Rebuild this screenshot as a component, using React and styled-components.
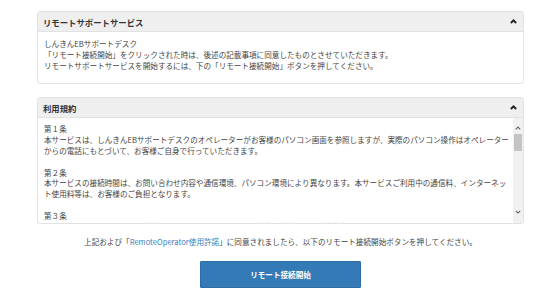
import styled, { createGlobalStyle } from "styled-components";

const GlobalStyle = createGlobalStyle`
  body {
    margin: 0;
    background: #fff;
    font-family: "Noto Sans CJK JP", "Noto Sans", sans-serif;
    color: #444;
  }
`;

const Page = styled.div`
  padding: 11px 29px 0 37px;
`;

const Panel = styled.section`
  border: 1px solid #e2e2e2;
  border-radius: 3px;
  background: #fff;
  margin-bottom: 13px;
  overflow: hidden;
`;

const Heading = styled.div`
  display: flex;
  align-items: center;
  justify-content: space-between;
  height: 19px;
  padding: 0 6px 0 5px;
  background: #efefef;
  border-bottom: 1px solid #e2e2e2;
  font-size: 8.4px;
  font-weight: bold;
  color: #333;
`;

const Body = styled.div`
  padding: 7px 6px 12px;
  font-size: 7.6px;
  line-height: 10.8px;
`;

const ScrollBody = styled.div`
  display: flex;
  height: 105px;
`;

const ScrollText = styled.div`
  flex: 1;
  overflow: hidden;
  padding: 6px 0 0 6px;
  max-width: 465px;
  font-size: 7.6px;
  line-height: 10.8px;
`;

const Article = styled.p`
  margin: 0 0 10.8px;
`;

const Scrollbar = styled.div`
  margin-left: auto;
  width: 10px;
  background: #f1f1f1;
  display: flex;
  flex-direction: column;
  align-items: center;
  padding: 8px 0 9px;
  box-sizing: border-box;
`;

const Thumb = styled.div`
  width: 8px;
  height: 17px;
  margin-top: 4px;
  background: #c4c4c4;
`;

const Spacer = styled.div`
  flex: 1;
`;

const Notice = styled.p`
  margin: 12px 0 0;
  text-align: center;
  font-size: 7.6px;
  line-height: 10px;
  color: #444;
  a {
    color: #3a7fc1;
    text-decoration: none;
  }
`;

const ButtonRow = styled.div`
  display: flex;
  justify-content: center;
  margin-top: 14px;
`;

const Button = styled.button`
  width: 161px;
  height: 27px;
  background: #337ab7;
  border: 1px solid #2e6da4;
  border-radius: 1px;
  color: #fff;
  font-family: inherit;
  font-size: 7.6px;
  font-weight: bold;
  cursor: pointer;
`;

const Chevron = ({ up = true, weight = 2.2, color = "#222", w = 7, h = 5 }) => (
  <svg width={w} height={h} viewBox="0 0 8 5">
    <polyline
      points={up ? "1,4.2 4,1.2 7,4.2" : "1,1 4,4 7,1"}
      fill="none"
      stroke={color}
      strokeWidth={weight}
    />
  </svg>
);

export default function App() {
  return (
    <Page>
      <GlobalStyle />
      <Panel>
        <Heading>
          <span>リモートサポートサービス</span>
          <Chevron />
        </Heading>
        <Body>
          しんきんEBサポートデスク
          <br />
          「リモート接続開始」をクリックされた時は、後述の記載事項に同意したものとさせていただきます。
          <br />
          リモートサポートサービスを開始するには、下の「リモート接続開始」ボタンを押してください。
        </Body>
      </Panel>
      <Panel>
        <Heading>
          <span>利用規約</span>
          <Chevron />
        </Heading>
        <ScrollBody>
          <ScrollText>
            <Article>
              第１条
              <br />
              本サービスは、しんきんEBサポートデスクのオペレーターがお客様のパソコン画面を参照しますが、実際のパソコン操作はオペレーターからの電話にもとづいて、お客様ご自身で行っていただきます。
            </Article>
            <Article>
              第２条
              <br />
              本サービスの接続時間は、お問い合わせ内容や通信環境、パソコン環境により異なります。本サービスご利用中の通信料、インターネット使用料等は、お客様のご負担となります。
            </Article>
            <Article>
              第３条
              <br />
              本サービスの利用により、お客様のパソコンに何らかの不具合が生じた場合でも、当金庫は一切の責任を負いません。
            </Article>
          </ScrollText>
          <Scrollbar>
            <Chevron weight={1.4} color="#606060" w={6} h={4} />
            <Thumb />
            <Spacer />
            <Chevron up={false} weight={1.4} color="#606060" w={6} h={4} />
          </Scrollbar>
        </ScrollBody>
      </Panel>
      <Notice>
        上記および「<a href="#">RemoteOperator使用許諾</a>」に同意されましたら、以下のリモート接続開始ボタンを押してください。
      </Notice>
      <ButtonRow>
        <Button>リモート接続開始</Button>
      </ButtonRow>
    </Page>
  );
}
